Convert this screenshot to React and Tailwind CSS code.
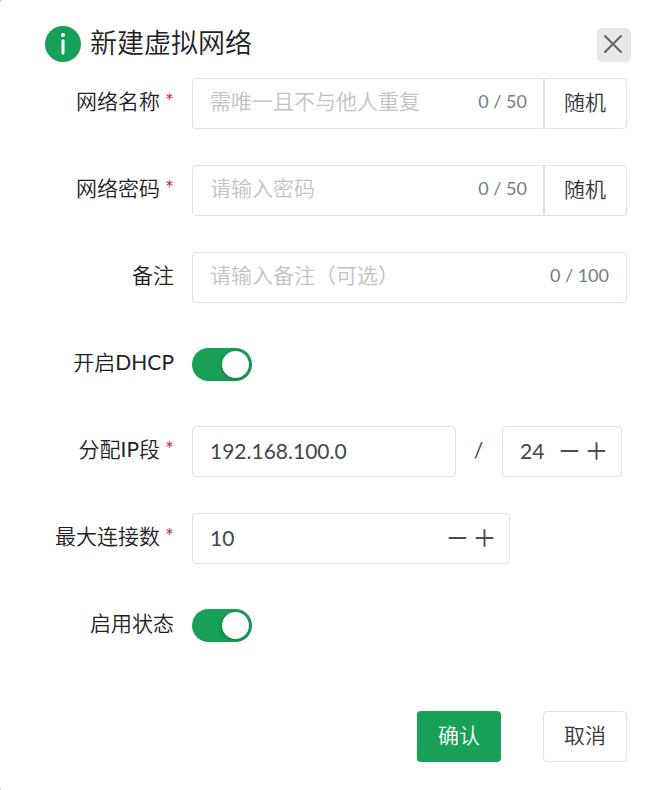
import React from "react";

const box = "h-[51px] rounded-[4px] border border-[#e0e0e6] bg-white";

function Row({ label, required, children }) {
  return (
    <div className="flex h-[51px] mb-9">
      <div className="flex w-[174px] shrink-0 justify-end pt-[7px] leading-8 text-[#1f2225]">
        <span>{label}</span>
        {required && <span className="ml-[5px] w-[9px] font-normal text-[#d03050]">*</span>}
      </div>
      <div className="ml-[18px] flex">{children}</div>
    </div>
  );
}

function TextField({ placeholder, count, className }) {
  return (
    <div className={`${box} flex justify-between pl-[17px] ${className}`}>
      <span className="pt-[6px] leading-8 text-[#c2c2c2]">{placeholder}</span>
      <span className="pt-[6px] text-[18px] font-normal leading-8 text-[#767c82]">{count}</span>
    </div>
  );
}

function RandomButton() {
  return (
    <button className="h-[51px] w-[83px] rounded-r-[4px] border border-[#e0e0e6] pb-[3px] pr-px text-[#333639]">
      随机
    </button>
  );
}

function Steppers() {
  return (
    <svg width="46" height="20" viewBox="0 0 46 20" fill="none" stroke="#4a4e51" strokeWidth="1.9" strokeLinecap="round">
      <path d="M1.5 10h16M28.5 10h16M36.5 2v16" />
    </svg>
  );
}

function NumberField({ value, className }) {
  return (
    <div className={`${box} flex items-center justify-between pl-[17px] pr-[15px] pb-[2px] font-normal text-[#43474a] ${className}`}>
      <span>{value}</span>
      <Steppers />
    </div>
  );
}

function Toggle() {
  return (
    <div className="mt-[9px] flex h-[33px] w-[60px] items-center justify-end rounded-full bg-[#18a058] pr-[3px]">
      <div className="size-[27px] rounded-full bg-white shadow-[0_1px_4px_rgba(0,0,0,0.3)]" />
    </div>
  );
}

export default function App() {
  return (
    <div className="h-[790px] w-[666px] bg-[#999]">
      <main className="h-full w-full overflow-hidden rounded-l-[2px] bg-white pt-[26px] font-['Lato','Noto_Sans_CJK_SC',sans-serif] text-[21px] font-[350]">
        <header className="flex h-[52px] pl-[45px]">
          <svg width="36" height="36" viewBox="0 0 36 36">
            <circle cx="18" cy="18" r="18" fill="#18a058" />
            <circle cx="18" cy="9" r="2" fill="#fff" />
            <path d="M18 14.7v12.2" stroke="#fff" strokeWidth="3" strokeLinecap="round" />
          </svg>
          <h1 className="ml-[9px] text-[27px] leading-[34px] text-[#1f2225]">新建虚拟网络</h1>
          <button className="ml-auto mr-[35px] mt-[2px] flex size-[34px] items-center justify-center rounded-[5px] bg-[#e8e8e8] pb-[2px] pr-[2px]">
            <svg width="20" height="20" viewBox="0 0 20 20" fill="none" stroke="#656565" strokeWidth="2.1" strokeLinecap="round">
              <path d="M2 2l16 16M18 2L2 18" />
            </svg>
          </button>
        </header>
        <Row label="网络名称" required>
          <TextField placeholder="需唯一且不与他人重复" count="0 / 50" className="w-[352px] rounded-r-none pr-4" />
          <RandomButton />
        </Row>
        <Row label="网络密码" required>
          <TextField placeholder="请输入密码" count="0 / 50" className="w-[352px] rounded-r-none pr-4" />
          <RandomButton />
        </Row>
        <Row label="备注">
          <TextField placeholder="请输入备注（可选）" count="0 / 100" className="w-[435px] pr-[17px]" />
        </Row>
        <Row label={<>开启<span className="font-normal">DHCP</span></>}>
          <Toggle />
        </Row>
        <Row label={<>分配<span className="font-normal">IP</span>段</>} required>
          <div className={`${box} flex w-[264px] items-center pb-[2px] pl-[17px] font-normal text-[#43474a]`}>192.168.100.0</div>
          <span className="w-[45px] pt-[8px] text-center font-normal leading-8 text-[#43474a]">/</span>
          <NumberField value="24" className="ml-px w-[120px]" />
        </Row>
        <Row label="最大连接数" required>
          <NumberField value="10" className="w-[318px]" />
        </Row>
        <Row label="启用状态">
          <Toggle />
        </Row>
        <footer className="mt-[60px] flex justify-end gap-[42px] pr-[39px]">
          <button className="h-[51px] w-[84px] rounded-[4px] bg-[#18a058] pb-1 text-white">确认</button>
          <button className={`${box} w-[84px] pb-1 text-[#333639]`}>取消</button>
        </footer>
      </main>
    </div>
  );
}
